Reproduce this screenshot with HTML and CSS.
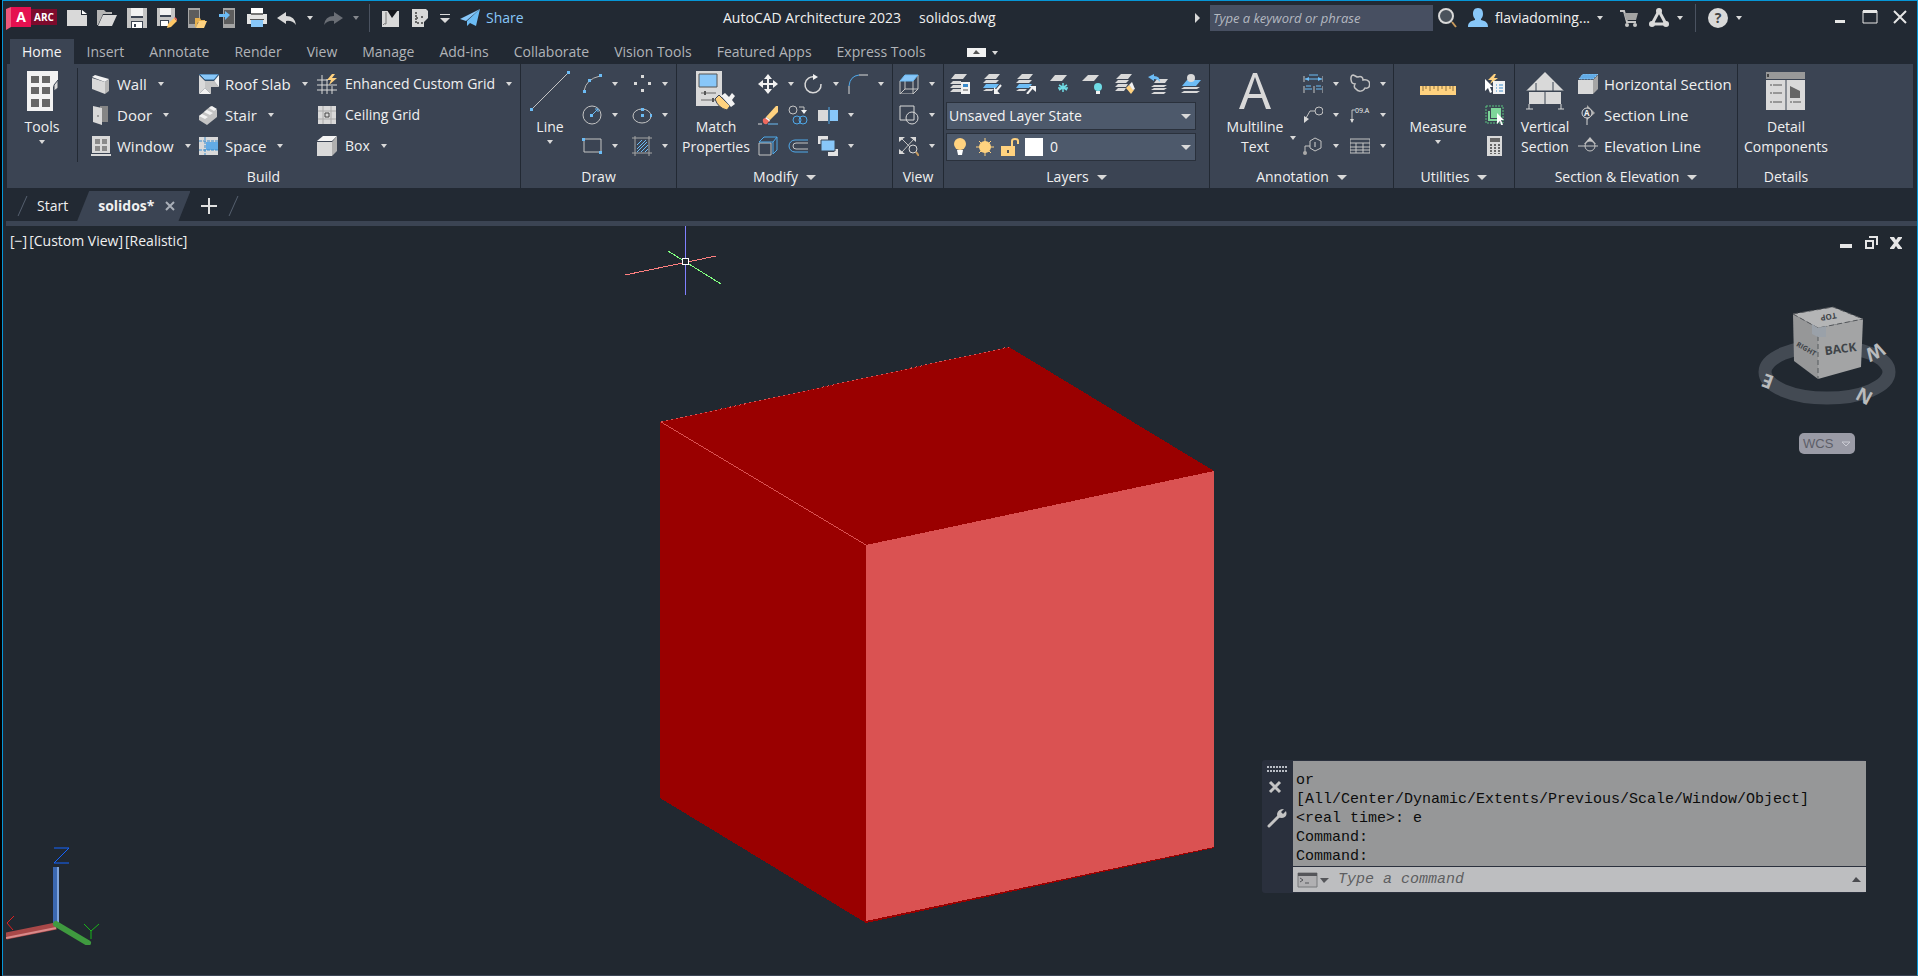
FILE: index.html
```html
<!DOCTYPE html>
<html lang="en">
<head>
    <meta charset="UTF-8">
    <meta name="viewport" content="width=device-width, initial-scale=1.0">
    <title>AutoCAD Architecture 2023 - solidos.dwg</title>
    <link rel="stylesheet" href="styles.css">
</head>
<body>
<div class="app">

    <!-- Title bar -->
    <header class="titlebar">
        <div class="quick-access">
            <button class="logo" aria-label="Application menu">
                <svg class="logo-fold" viewBox="0 0 5 23"><path d="M0 2L5 0V20L0 23Z" fill="#f0587c"/></svg>
                <span class="logo-a">A</span><span class="logo-arc">ARC</span>
            </button>
            <button aria-label="New"><svg viewBox="0 0 20 20"><path d="M0 2H14V7H20V18H0Z" fill="#d9d9d9"/><path d="M15 2L20 6H15Z" fill="#fff"/></svg></button>
            <button aria-label="Open"><svg viewBox="0 0 20 20"><path d="M0 2H7L9 4H15V6H6L1 17H0Z" fill="#b5b5b5"/><path d="M6 7H20L15 18H1Z" fill="#d9d9d9"/></svg></button>
            <button aria-label="Save"><svg viewBox="0 0 20 20"><path d="M0 0H20V20H0Z" fill="#c4c4c4"/><path d="M4 0H16V9H4Z" fill="#f2f2f2"/><path d="M4 8H16V10H4ZM4 13H16V20H4Z" fill="#3c4452"/><path d="M5 14H15V20H5Z" fill="#fff"/><path d="M7 16H9V19H7Z" fill="#3c4452"/></svg></button>
            <button aria-label="Save as"><svg viewBox="0 0 20 20"><path d="M0 0H18V11L10 18H0Z" fill="#c4c4c4"/><path d="M3 0H14V7H3Z" fill="#f2f2f2"/><path d="M3 7H14V9H3ZM3 12H12V18H3Z" fill="#3c4452"/><path d="M4 13H11V18H4Z" fill="#fff"/><path d="M10 20L11 16L17 10L20 13L14 19Z" fill="#ffc766"/><path d="M17 10L18 9L20 11L20 13Z" fill="#ef6a5e"/></svg></button>
            <button aria-label="Open from mobile"><svg viewBox="0 0 20 20"><path d="M1 0H13V20H1Z" fill="#a5a5a5"/><path d="M2 2H12V16H2Z" fill="#5d5d5d"/><path d="M8 10H13L14 12H18V14H11L9 19H8Z" fill="#e8b14e"/><path d="M12 13H20L17 20H9Z" fill="#ffd27f"/></svg></button>
            <button aria-label="Save to mobile"><svg viewBox="0 0 20 20"><path d="M6 0H18V20H6Z" fill="#a5a5a5"/><path d="M7 2H17V16H7Z" fill="#5d5d5d"/><path d="M2 6H8V3L13 7L8 12V9H2Z" fill="#6cbcf5"/></svg></button>
            <button aria-label="Plot"><svg viewBox="0 0 20 20"><path d="M4 0H16V5H4Z" fill="#fff"/><path d="M0 6H20V16H0Z" fill="#e3e3e3"/><path d="M4 5H16V7H4Z" fill="#777"/><path d="M4 12H16V19H4Z" fill="#88c7f9"/><path d="M3 11H17V12H3Z" fill="#555"/></svg></button>
            <button aria-label="Undo"><svg viewBox="0 0 20 20"><path d="M0 10L9 4V8Q18 8 19 17Q15 12 9 13V16Z" fill="#d9d9d9"/></svg></button>
            <span class="caret"></span>
            <button aria-label="Redo"><svg viewBox="0 0 20 20"><path d="M20 10L11 4V8Q2 8 1 17Q5 12 11 13V16Z" fill="#6a6e75"/></svg></button>
            <span class="caret dim"></span>
            <span class="bar-divider"></span>
            <button aria-label="Project navigator"><svg viewBox="0 0 20 20"><path d="M2 3H19V19H2Z" fill="#d9d9d9"/><path d="M7 2H18L12 10Z" fill="#15181d"/><path d="M6 4V16Q4 15 3 17" fill="none" stroke="#777"/></svg></button>
            <button aria-label="Design center"><svg viewBox="0 0 20 20"><path d="M2 1H16L18 3V10L14 14V19H2Z" fill="#d9d9d9"/><path d="M5 5H8M6 7V15H9M6 10H9M11 9H13M11 15H13" stroke="#666" stroke-width="2" stroke-dasharray="2 1" fill="none"/></svg></button>
            <button class="customize" aria-label="Customize"><svg viewBox="0 0 10 9"><path d="M0 0H10V1H0ZM0 4H10L5 9Z" fill="#d9d9d9"/></svg></button>
            <a class="share" href="#"><svg viewBox="0 0 20 20"><path d="M20 1L0 11L6 13Z" fill="#88c7f9"/><path d="M20 1L7 13V18L10 15L16 18Z" fill="#6cbcf5"/></svg>Share</a>
        </div>

        <div class="title"><span>AutoCAD Architecture 2023</span><span>solidos.dwg</span></div>

        <div class="infocenter">
            <button class="expand" aria-label="Collapse search"><svg viewBox="0 0 5 10"><path d="M0 0L5 5L0 10Z" fill="#d9d9d9"/></svg></button>
            <div class="search-box">
                <input class="search" type="text" placeholder="Type a keyword or phrase" aria-label="Search">
                <button aria-label="Search"><svg viewBox="0 0 20 20"><circle cx="8" cy="8" r="7" fill="#4a525b" stroke="#d9d9d9" stroke-width="2"/><path d="M14 14L18 19" stroke="#c79a5c" stroke-width="2"/></svg></button>
            </div>
            <button class="user"><svg viewBox="0 0 20 20"><path d="M10 0C14 0 15 3 15 6C15 8 14 10 13 11V12C18 13 20 15 20 19H0C0 15 2 13 7 12V11C6 10 5 8 5 6C5 3 6 0 10 0Z" fill="#88c7f9"/></svg><span>flaviadoming...</span><span class="caret"></span></button>
            <button aria-label="App store"><svg viewBox="0 0 20 20"><path d="M1 3H5L8 14H17" fill="none" stroke="#c6c6c6" stroke-width="2"/><path d="M5 5H19L17 12H7Z" fill="#a3a3a3"/><circle cx="8" cy="17" r="2" fill="#c6c6c6"/><circle cx="16" cy="17" r="2" fill="#c6c6c6"/></svg></button>
            <button class="with-caret" aria-label="Autodesk app"><svg viewBox="0 0 20 20"><path d="M10 3L3 16H17Z" fill="none" stroke="#d9d9d9" stroke-width="3"/><circle cx="10" cy="3" r="3" fill="#d9d9d9"/><circle cx="3" cy="16" r="3" fill="#d9d9d9"/><circle cx="17" cy="16" r="3" fill="#d9d9d9"/></svg><span class="caret"></span></button>
            <span class="bar-divider"></span>
            <button class="with-caret help" aria-label="Help"><span class="help-mark">?</span><span class="caret"></span></button>
            <div class="window-buttons">
                <button aria-label="Minimize"><svg viewBox="0 0 16 14"><path d="M3 10H13V13H3Z" fill="#e6e6e6"/></svg></button>
                <button aria-label="Maximize"><svg viewBox="0 0 16 14"><path d="M1 1H15V13H1Z" fill="none" stroke="#e6e6e6"/><path d="M1 0H15V3H1Z" fill="#e6e6e6"/></svg></button>
                <button aria-label="Close"><svg viewBox="0 0 16 14"><path d="M2 1L14 13M14 1L2 13" stroke="#e6e6e6" stroke-width="2"/></svg></button>
            </div>
        </div>
    </header>

    <!-- Ribbon tabs -->
    <nav class="ribbon-tabs">
        <a class="active" href="#">Home</a>
        <a href="#">Insert</a>
        <a href="#">Annotate</a>
        <a href="#">Render</a>
        <a href="#">View</a>
        <a href="#">Manage</a>
        <a href="#">Add-ins</a>
        <a href="#">Collaborate</a>
        <a href="#">Vision Tools</a>
        <a href="#">Featured Apps</a>
        <a href="#">Express Tools</a>
        <button class="minimize-ribbon" aria-label="Minimize ribbon"><svg viewBox="0 0 19 9"><path d="M0 0H19V9H0Z" fill="#f2f2f2"/><path d="M6 6H13L9 2Z" fill="#555"/></svg><span class="caret"></span></button>
    </nav>

    <!-- Ribbon panels -->
    <div class="ribbon">
        <section class="panel panel-build">
            <div class="panel-body">
                <button class="big"><svg viewBox="0 0 40 40"><path d="M5 0H36V10L31 16V40H5Z" fill="#f2f2f2"/><path d="M32 14L36 9V17L32 20Z" fill="#d9d9d9" stroke="#3b4453"/><path d="M9 5H17V12H9ZM20 5H28V12H20ZM9 16H17V23H9ZM20 16H28V23H20ZM9 28H17V36H9ZM20 28H28V36H20Z" fill="#666"/></svg><span>Tools</span><span class="caret"></span></button>
                <div class="build-tools">
                    <button class="tool"><svg viewBox="0 0 20 20"><path d="M1 4L14 8V20L1 15Z" fill="#d9d9d9"/><path d="M1 3L4 1L18 5L14 8Z" fill="#f2f2f2"/><path d="M14 8L18 5V17L14 20Z" fill="#b5b5b5"/></svg>Wall<span class="caret"></span></button>
                    <button class="tool"><svg viewBox="0 0 20 20"><path d="M9 1H17V17H9Z" fill="#858585"/><path d="M2 1L11 3V20L2 17Z" fill="#d9d9d9"/><circle cx="7" cy="11" r="1" fill="#888"/></svg>Door<span class="caret"></span></button>
                    <button class="tool"><svg viewBox="0 0 20 20"><path d="M1 0H19V17H1ZM0 18H20V20H0Z" fill="#d9d9d9"/><path d="M4 3H9V8H4ZM11 3H16V8H11ZM4 10H9V15H4ZM11 10H16V15H11Z" fill="#8a8a8a"/></svg>Window<span class="caret"></span></button>
                    <button class="tool"><svg viewBox="0 0 20 20"><path d="M0 0H20L15 6H6Z" fill="#88c7f9" stroke="#2d5c85"/><path d="M0 1L6 7V14L0 20Z" fill="#d9d9d9"/><path d="M6 7H15L20 13H12V20L6 14Z" fill="#c4c4c4"/><path d="M0 20L6 14L12 20ZM20 1V13L15 7Z" fill="#f2f2f2"/></svg>Roof Slab<span class="caret"></span></button>
                    <button class="tool"><svg viewBox="0 0 20 20"><path d="M0 11L5 7L7 5L12 1L18 5V12L8 20L0 15Z" fill="#c4c4c4"/><path d="M0 11L3 9L9 12L6 14ZM5 7L8 5L14 8L11 10ZM10 3L13 1L18 4L15 6Z" fill="#f2f2f2"/></svg>Stair<span class="caret"></span></button>
                    <button class="tool"><svg viewBox="0 0 20 20"><path d="M0 1H19V19H0Z" fill="#d9d9d9"/><path d="M7 6H19V14H7Z" fill="#62abe6"/><path d="M6 1V19M0 5H19M0 14H19" stroke="#3b8bcb" stroke-dasharray="3 1"/></svg>Space<span class="caret"></span></button>
                    <button class="tool wide"><svg viewBox="0 0 20 20"><path d="M5 1V20M10 5V20M15 12V20M0 6H11M0 11H20M0 16H20" stroke="#d9d9d9"/><path d="M15 0L10 6H14L12 11L20 4H15L18 0Z" fill="#ffd27f"/></svg>Enhanced Custom Grid<span class="caret"></span></button>
                    <button class="tool wide"><svg viewBox="0 0 20 20"><path d="M1 1H19V19H1Z" fill="#d9d9d9"/><path d="M6 1V19M14 1V19M1 6H19M1 14H19" stroke="#aaa"/><path d="M8 8H12V12H8Z" fill="#d9d9d9" stroke="#444"/></svg>Ceiling Grid</button>
                    <button class="tool wide"><svg viewBox="0 0 20 20"><path d="M0 6H15V20H0Z" fill="#d9d9d9"/><path d="M0 5L6 0H20L15 5Z" fill="#f5f5f5"/><path d="M15 6L20 0V15L15 20Z" fill="#b0b0b0"/></svg>Box<span class="caret"></span></button>
                </div>
            </div>
            <h2>Build</h2>
        </section>

        <section class="panel panel-draw">
            <div class="panel-body">
                <button class="big"><svg viewBox="0 0 40 40"><path d="M2 38L38 2" stroke="#c4c4c4"/><path d="M0 37H3V40H0ZM37 0H40V3H37Z" fill="#6cbcf5"/></svg><span>Line</span><span class="caret"></span></button>
                <div class="icon-grid">
                    <button class="tool" aria-label="Arc"><svg viewBox="0 0 20 20"><path d="M2 17Q4 5 18 2" fill="none" stroke="#b5b5b5"/><path d="M1 16H4V19H1ZM6 5H9V8H6ZM17 0H20V3H17Z" fill="#6cbcf5"/></svg><span class="caret"></span></button>
                    <button class="tool" aria-label="Multiple points"><svg viewBox="0 0 20 20"><path d="M9 1H12V4H9ZM2 8H5V11H2ZM16 8H19V11H16ZM9 15H12V18H9Z" fill="#d9d9d9"/></svg><span class="caret"></span></button>
                    <button class="tool" aria-label="Circle"><svg viewBox="0 0 20 20"><circle cx="10" cy="10" r="9" fill="none" stroke="#c4c4c4"/><path d="M10 10L16 4M13 4H16V7" fill="none" stroke="#6cbcf5"/><path d="M8 9H11V12H8Z" fill="#6cbcf5"/></svg><span class="caret"></span></button>
                    <button class="tool" aria-label="Ellipse"><svg viewBox="0 0 20 20"><ellipse cx="10" cy="11" rx="9" ry="7" fill="none" stroke="#c4c4c4"/><path d="M9 3H12V6H9ZM9 9H12V12H9ZM18 9H20V12H18Z" fill="#6cbcf5"/></svg><span class="caret"></span></button>
                    <button class="tool" aria-label="Rectangle"><svg viewBox="0 0 20 20"><path d="M2 3H19V16H2Z" fill="none" stroke="#c4c4c4"/><path d="M0 2H3V5H0ZM17 15H20V18H17Z" fill="#6cbcf5"/></svg><span class="caret"></span></button>
                    <button class="tool" aria-label="Hatch"><svg viewBox="0 0 20 20"><path d="M3 0V20M17 0V20M0 2H20M0 17H20" stroke="#a5a5a5"/><path d="M5 9L10 4M5 13L14 4M5 16L15 6M9 16L16 9M13 16L16 13" stroke="#6cbcf5"/></svg><span class="caret"></span></button>
                </div>
            </div>
            <h2>Draw</h2>
        </section>

        <section class="panel panel-modify">
            <div class="panel-body">
                <button class="big"><svg viewBox="0 0 40 40"><path d="M0 0H26V35H0Z" fill="#d9d9d9"/><path d="M3 3H21V16H3Z" fill="#88c7f9" stroke="#555"/><path d="M5 22H20M5 29H20" stroke="#666"/><path d="M8 20H10V24H8ZM16 27H18V31H16Z" fill="#555"/><path d="M19 28L23 24L34 35L31 39Q22 37 19 28Z" fill="#ffd27f" stroke="#3b4453"/><path d="M25 25L29 22L33 26L36 22L39 25L36 29L39 33L35 36Z" fill="#f2f2f2"/></svg><span>Match<br>Properties</span></button>
                <div class="icon-rows">
                    <div class="icon-row">
                        <button class="tool" aria-label="Move"><svg viewBox="0 0 20 20"><path d="M10 3V17M3 10H17" stroke="#f2f2f2" stroke-width="2"/><path d="M10 0L14 5H6ZM10 20L14 15H6ZM0 10L5 6V14ZM20 10L15 6V14Z" fill="#f2f2f2"/></svg><span class="caret"></span></button>
                        <button class="tool" aria-label="Rotate"><svg viewBox="0 0 20 20"><path d="M12 3A8 8 0 1 0 18 10" fill="none" stroke="#d9d9d9" stroke-width="1.5"/><path d="M10 0L15 3L10 6Z" fill="#f2f2f2"/></svg><span class="caret"></span></button>
                        <button class="tool" aria-label="Fillet"><svg viewBox="0 0 20 20"><path d="M1 20V12M11 1H20" stroke="#d9d9d9"/><path d="M1 12Q2 2 11 1" fill="none" stroke="#4fa9ea"/></svg><span class="caret"></span></button>
                    </div>
                    <div class="icon-row">
                        <button class="tool" aria-label="Erase"><svg viewBox="0 0 20 20"><path d="M0 19H4" stroke="#d9d9d9"/><path d="M10 19H20" stroke="#6cbcf5"/><path d="M20 1V7L12 15L8 12L18 1Z" fill="#ffd27f"/><path d="M8 12L12 15L11 17L7 14Z" fill="#fff"/><path d="M5 14L7 13L11 16L9 19Q4 20 5 14Z" fill="#ef6a5e"/></svg></button>
                        <button class="tool" aria-label="Copy"><svg viewBox="0 0 20 20"><circle cx="5" cy="5" r="4" fill="none" stroke="#c4c4c4"/><path d="M11 2H16V6" fill="none" stroke="#c4c4c4"/><path d="M13 5H19L16 9Z" fill="#f2f2f2"/><circle cx="9" cy="15" r="4" fill="none" stroke="#4fa9ea"/><circle cx="15" cy="15" r="4" fill="none" stroke="#4fa9ea"/></svg></button>
                        <button class="tool" aria-label="Mirror"><svg viewBox="0 0 20 20"><path d="M0 5H10V16H0Z" fill="#d9d9d9"/><path d="M12 5H20V16H12Z" fill="#88c7f9"/><path d="M11 2V19" stroke="#4fa9ea"/></svg><span class="caret"></span></button>
                    </div>
                    <div class="icon-row">
                        <button class="tool" aria-label="Extrude"><svg viewBox="0 0 20 20"><path d="M1 7H13V19H1Z" fill="none" stroke="#c4c4c4"/><path d="M1 6L6 1H19L15 6ZM15 18L19 14V1M15 6V18" fill="none" stroke="#4fa9ea"/></svg></button>
                        <button class="tool" aria-label="Offset"><svg viewBox="0 0 20 20"><path d="M20 4H7A6 6 0 0 0 7 16H20" fill="none" stroke="#4fa9ea"/><path d="M20 7H8A3 3 0 0 0 8 13H20" fill="none" stroke="#c4c4c4"/></svg></button>
                        <button class="tool" aria-label="Draw order"><svg viewBox="0 0 20 20"><path d="M0 0H10V4H4V8H0ZM10 16H16V13H20V20H10Z" fill="#e3e3e3"/><path d="M3 4H17V15H3Z" fill="#88c7f9" stroke="#3b4453"/></svg><span class="caret"></span></button>
                    </div>
                </div>
            </div>
            <h2>Modify<span class="caret large"></span></h2>
        </section>

        <section class="panel panel-view">
            <div class="panel-body">
                <div class="icon-grid">
                    <button class="tool" aria-label="Views"><svg viewBox="0 0 20 20"><path d="M1 7V20H14V7M14 20L19 15V1M6 7V15H19M1 20L6 15" fill="none" stroke="#c4c4c4"/><path d="M1 7L6 1H19L14 7Z" fill="#88c7f9" stroke="#6cbcf5"/></svg><span class="caret"></span></button>
                    <button class="tool" aria-label="Visual styles"><svg viewBox="0 0 20 20"><path d="M1 1H15V15H1Z" fill="none" stroke="#d9d9d9"/><circle cx="13" cy="13" r="6" fill="none" stroke="#d9d9d9"/></svg><span class="caret"></span></button>
                    <button class="tool" aria-label="Zoom extents"><svg viewBox="0 0 20 20"><path d="M3 3L15 15M15 3L3 16" stroke="#c4c4c4"/><path d="M0 1H6L0 6ZM17 1H11L17 6ZM0 18H6L0 13Z" fill="#d9d9d9"/><circle cx="14" cy="13" r="4" fill="#3b4453" stroke="#d9d9d9"/><path d="M17 16L20 20" stroke="#c79a5c" stroke-width="2"/></svg><span class="caret"></span></button>
                </div>
            </div>
            <h2>View</h2>
        </section>

        <section class="panel panel-layers">
            <div class="panel-body">
                <div class="layer-controls">
                    <div class="layer-icons">
                        <button class="tool" aria-label="Layer properties"><svg viewBox="0 0 20 20"><path d="M5 0H17L13 5H1ZM3 7H11V10H0ZM3 11H11V14H0ZM3 15H11V18H0Z" fill="#d9d9d9"/><path d="M11 8H20V20H11Z" fill="#f2f2f2"/><path d="M13 10H18V13H13Z" fill="#3b8bcb"/><path d="M13 16H18" stroke="#555"/></svg></button>
                        <button class="tool" aria-label="Make current"><svg viewBox="0 0 20 20"><path d="M6 0H17L13 5H1ZM3 6H16L13 9H0ZM3 15H11L9 17H0Z" fill="#d9d9d9"/><path d="M3 10H16L13 14H0Z" fill="#6cbcf5"/><path d="M18 11L13 17" stroke="#f2f2f2" stroke-width="2"/><path d="M11 13V20H17Z" fill="#f2f2f2"/></svg></button>
                        <button class="tool" aria-label="Match layer"><svg viewBox="0 0 20 20"><path d="M6 0H17L13 5H1ZM3 6H16L13 9H0ZM3 15H11L9 17H0Z" fill="#d9d9d9"/><path d="M3 10H16L13 14H0Z" fill="#6cbcf5"/><path d="M11 20L16 14" stroke="#f2f2f2" stroke-width="2"/><path d="M13 12H20V18Z" fill="#f2f2f2"/></svg></button>
                        <button class="tool" aria-label="Freeze layer"><svg viewBox="0 0 20 20"><path d="M6 1H18L13 7H1Z" fill="#d9d9d9"/><path d="M14 9V18M10 11L18 16M18 11L10 16M9 14H19" stroke="#6fdce6" stroke-width="1.5"/></svg></button>
                        <button class="tool" aria-label="Layer off"><svg viewBox="0 0 20 20"><path d="M6 1H17L12 7H0Z" fill="#d9d9d9"/><circle cx="16" cy="13" r="4" fill="#6fdce6"/><path d="M14 17H18V20H14Z" fill="#f2f2f2"/></svg></button>
                        <button class="tool" aria-label="Match layer properties"><svg viewBox="0 0 20 20"><path d="M6 0H17L13 5H1ZM3 6H14L11 9H0ZM3 10H13L11 13H0ZM3 14H11L9 17H0Z" fill="#d9d9d9"/><path d="M11 14L14 11L19 16L16 20Z" fill="#ffd27f"/><path d="M14 11L17 8L20 15L18 16Z" fill="#f2f2f2"/></svg></button>
                        <button class="tool" aria-label="Layer previous"><svg viewBox="0 0 20 20"><path d="M9 5H20L17 9H6ZM6 11H19L16 13H3ZM6 14H19L16 16H3ZM6 18H18L16 20H3Z" fill="#d9d9d9"/><path d="M0 3L6 0V2Q12 2 12 8Q10 5 6 5V7Z" fill="#6cbcf5"/></svg></button>
                        <button class="tool" aria-label="Isolate layer"><svg viewBox="0 0 20 20"><path d="M6 6H20L15 12H1Z" fill="#6cbcf5"/><path d="M3 13H19L16 15H0ZM3 17H19L16 19H0Z" fill="#d9d9d9"/><circle cx="10" cy="4" r="4" fill="#d9d9d9"/></svg></button>
                    </div>
                    <div class="combo">
                        <select aria-label="Layer state"><option>Unsaved Layer State</option></select>
                        <span class="caret large"></span>
                    </div>
                    <div class="combo layer-combo">
                        <svg viewBox="0 0 20 20"><circle cx="10" cy="7" r="6" fill="#ffd27f"/><path d="M7 13H13L12 18H8Z" fill="#fff"/></svg>
                        <svg viewBox="0 0 20 20"><path d="M10 1V19M1 10H19M4 4L16 16M16 4L4 16" stroke="#ffd27f"/><circle cx="10" cy="10" r="6" fill="#ffd27f"/></svg>
                        <svg viewBox="0 0 20 20"><path d="M1 9H15V19H1Z" fill="#ffd27f"/><path d="M12 9V4Q12 2 15 2Q18 2 18 4V7" fill="none" stroke="#ffd27f" stroke-width="2"/><path d="M8 13V16" stroke="#555" stroke-width="2"/></svg>
                        <span class="swatch"></span>
                        <select aria-label="Layer"><option>0</option></select>
                        <span class="caret large"></span>
                    </div>
                </div>
            </div>
            <h2>Layers<span class="caret large"></span></h2>
        </section>

        <section class="panel panel-annotation">
            <div class="panel-body">
                <button class="big"><svg viewBox="0 0 40 40"><path d="M4 38L18 2H22L36 38H31L27 27H13L9 38ZM14 23H26L20 6Z" fill="#d9d9d9" fill-rule="evenodd"/></svg><span>Multiline<br>Text</span><span class="caret side"></span></button>
                <div class="icon-grid">
                    <button class="tool" aria-label="Dimension"><svg viewBox="0 0 20 20"><path d="M1 2V8M20 2V8M1 12V19M20 12V19M11 12V19" stroke="#c4c4c4"/><path d="M2 5H19M6 1H15M2 15H9M13 15H19M3 12H8M13 12H18" stroke="#6cbcf5"/><path d="M2 5L6 3V7ZM19 5L15 3V7Z" fill="#6cbcf5"/></svg><span class="caret"></span></button>
                    <button class="tool" aria-label="Revision cloud"><svg viewBox="0 0 20 20"><path d="M5 10C0 10 0 1 3 1C6 2 6 3 8 3C11 2 13 3 13 6C18 5 21 8 19 13C17 15 16 14 15 14C13 18 8 18 6 15C4 14 4 12 5 10Z" fill="none" stroke="#c4c4c4" stroke-width="1.5"/></svg><span class="caret"></span></button>
                    <button class="tool" aria-label="Leader"><svg viewBox="0 0 20 20"><path d="M3 13L7 6H12" fill="none" stroke="#c4c4c4"/><circle cx="16" cy="6" r="4" fill="none" stroke="#c4c4c4"/><path d="M1 11L6 14L1 18Z" fill="#d9d9d9"/></svg><span class="caret"></span></button>
                    <button class="tool" aria-label="Keynote"><svg viewBox="0 0 20 20"><path d="M2 17V5H5" fill="none" stroke="#c4c4c4"/><path d="M0 14H4L2 18Z" fill="#d9d9d9"/><text x="5" y="8" font-size="7" fill="#f2f2f2">09.A</text></svg><span class="caret"></span></button>
                    <button class="tool" aria-label="Callout"><svg viewBox="0 0 20 20"><path d="M2 17V10H7M12 2L18 5V12L12 15L7 12V5Z" fill="none" stroke="#c4c4c4"/><path d="M12 6V11" stroke="#d9d9d9"/><circle cx="2" cy="17" r="2" fill="#aaa"/></svg><span class="caret"></span></button>
                    <button class="tool" aria-label="Table"><svg viewBox="0 0 20 20"><path d="M0 3H20V17H0ZM0 7H20M0 11H20M0 14H20M6 7V17M13 7V17" fill="none" stroke="#c4c4c4"/></svg><span class="caret"></span></button>
                </div>
            </div>
            <h2>Annotation<span class="caret large"></span></h2>
        </section>

        <section class="panel panel-utilities">
            <div class="panel-body">
                <button class="big"><svg viewBox="0 0 40 40"><path d="M2 15H38V24H2Z" fill="#ffd27f"/><path d="M5 15V20M8 15V18M12 15V20M16 15V18M20 15V20M24 15V18M28 15V20M32 15V18M35 15V20" stroke="#8f7442"/></svg><span>Measure</span><span class="caret"></span></button>
                <div class="icon-grid">
                    <button class="tool" aria-label="Quick select"><svg viewBox="0 0 20 20"><path d="M9 0L3 6H7L5 10L13 4H9L11 0Z" fill="#ffd27f"/><path d="M8 7H20V20H8Z" fill="#f2f2f2"/><path d="M11 11H12M14 11H18M11 14H12M14 14H18M11 17H12M14 17H18" stroke="#3b8bcb"/><path d="M0 5L8 13H5L7 18L5 19L3 14L0 17Z" fill="#fff"/></svg></button>
                    <button class="tool" aria-label="Select similar"><svg viewBox="0 0 20 20"><path d="M1 1H18V18H1Z" fill="none" stroke="#5bc480" stroke-dasharray="2 1"/><path d="M6 3H16V13H6Z" fill="#7ed69a"/><path d="M3 6H5V14H13V16H3Z" fill="#7ed69a"/><path d="M12 8L19 15H16L18 20L16 20L15 16L12 19Z" fill="#fff"/></svg></button>
                    <button class="tool" aria-label="Calculator"><svg viewBox="0 0 20 20"><path d="M2 0H17V20H2Z" fill="#d9d9d9"/><path d="M5 2H15V6H5Z" fill="#666"/><path d="M6 8V18M10 8V18M14 8V18" stroke="#666" stroke-width="2" stroke-dasharray="2 1"/></svg></button>
                </div>
            </div>
            <h2>Utilities<span class="caret large"></span></h2>
        </section>

        <section class="panel panel-section">
            <div class="panel-body">
                <button class="big"><svg viewBox="0 0 40 40"><path d="M20 1L39 20H1Z" fill="#d9d9d9"/><path d="M4 21H36V33H4Z" fill="#d9d9d9"/><path d="M4 33V38M36 33V38M1 38H8M33 38H39" stroke="#d9d9d9"/><path d="M11 12V20M28 11V20M20 20V33M1 20H39" stroke="#3b4453"/></svg><span>Vertical<br>Section</span></button>
                <div class="section-tools">
                    <button class="tool"><svg viewBox="0 0 20 20"><path d="M0 6H15V20H0Z" fill="#d9d9d9"/><path d="M15 6L20 1V15L15 20Z" fill="#a5a5a5"/><path d="M1 5L5 0H20L15 5Z" fill="#62abe6" stroke="#88c7f9" stroke-dasharray="2 1"/></svg>Horizontal Section</button>
                    <button class="tool"><svg viewBox="0 0 20 20"><path d="M9 0L17 8L9 15Z" fill="#a5a5a5"/><path d="M9 12V20" stroke="#d9d9d9"/><circle cx="9" cy="8" r="5" fill="#3b4453" stroke="#d9d9d9"/><text x="6" y="11" font-size="8" font-weight="bold" fill="#f2f2f2">A</text></svg>Section Line</button>
                    <button class="tool"><svg viewBox="0 0 20 20"><path d="M0 10H20" stroke="#c4c4c4"/><path d="M12 1L18 8H6Z" fill="#c4c4c4"/><circle cx="12" cy="10" r="5" fill="#3b4453" stroke="#c4c4c4"/><path d="M7 10H17" stroke="#c4c4c4"/></svg>Elevation Line</button>
                </div>
            </div>
            <h2>Section &amp; Elevation<span class="caret large"></span></h2>
        </section>

        <section class="panel panel-details">
            <div class="panel-body">
                <button class="big"><svg viewBox="0 0 40 40"><path d="M0 1H39V8H0Z" fill="#999"/><path d="M0 9H39V39H0Z" fill="#d9d9d9"/><path d="M1 3H3V6H1Z" fill="#444"/><path d="M20 9V39" stroke="#3b4453"/><path d="M24 15L34 20V27H24Z" fill="#666"/><path d="M4 14H16M4 22H16M4 31H16M24 31H35" stroke="#555" stroke-dasharray="2 1 9 1"/></svg><span>Detail<br>Components</span></button>
            </div>
            <h2>Details</h2>
        </section>
    </div>

    <!-- Open drawings -->
    <nav class="doc-tabs">
        <span class="slash"></span>
        <a href="#">Start</a>
        <div class="doc-active">
            <a href="#">solidos*</a>
            <button aria-label="Close drawing"><svg viewBox="0 0 12 12"><path d="M2 2L10 10M10 2L2 10" stroke="#a9afb8" stroke-width="2"/></svg></button>
        </div>
        <button class="new-tab" aria-label="New drawing"><svg viewBox="0 0 16 16"><path d="M8 0V16M0 8H16" stroke="#e0e0e0" stroke-width="2"/></svg></button>
        <span class="slash"></span>
    </nav>

    <!-- Drawing area -->
    <main class="viewport">
        <div class="view-label"><button>[&minus;]</button><button>[Custom View]</button><button>[Realistic]</button></div>

        <div class="view-buttons">
            <button aria-label="Minimize view"><svg viewBox="0 0 14 14"><path d="M1 8H13V12H1Z" fill="#e6e6e6"/></svg></button>
            <button aria-label="Restore view"><svg viewBox="0 0 14 14"><path d="M5 1H13V9M2 5H9V12H2Z" fill="none" stroke="#e6e6e6" stroke-width="2"/></svg></button>
            <button aria-label="Close view"><svg viewBox="0 0 14 14"><path d="M1 1H5L7 4L9 1H13V2L9 7L13 12V13H9L7 10L5 13H1V12L5 7L1 2Z" fill="#e6e6e6"/></svg></button>
        </div>

        <svg class="crosshair" viewBox="0 0 100 70" shape-rendering="crispEdges">
            <path d="M61 0V69" stroke="#8080ff"/>
            <path d="M1 49L92 30" stroke="#ff8080"/>
            <path d="M44 25L97 58" stroke="#80ff80"/>
            <path d="M58 32H64V38H58Z" fill="#212830" stroke="#fff"/>
        </svg>

        <svg class="solid" viewBox="0 0 555 577" shape-rendering="crispEdges">
            <path d="M0 75L349 0L554 124L206 198L206 576L0 451Z" fill="#9a0000"/>
            <path d="M206 576L554 501V499L206 574Z" fill="#9a0000"/>
            <path d="M206 198L554 124V500L206 574Z" fill="#da5252"/>
            <path d="M1 75L206 198" stroke="#da5252"/>
            <path d="M1 75L349 0" stroke="#da5252" stroke-dasharray="2 3"/>
        </svg>

        <div class="viewcube">
            <svg viewBox="0 0 150 110">
                <ellipse cx="77" cy="68" rx="62" ry="26" fill="none" stroke="#434a53" stroke-width="13"/>
                <g fill="#b9bbbd" font-size="19" font-weight="bold" text-anchor="middle">
                    <text transform="translate(20 71) rotate(200)">E</text>
                    <text transform="translate(111 98) rotate(28)">N</text>
                    <text transform="translate(122 42) rotate(152)">W</text>
                </g>
                <path d="M43 10L83 3L113 15L68 24Z" fill="#b4b5b6"/>
                <path d="M43 10L68 24V75L44 57Z" fill="#969798"/>
                <path d="M68 24L113 15L111 63L68 75Z" fill="#a3a4a5"/>
                <path d="M43 10L68 24L113 15M68 24V75M43 10L83 3L113 15" fill="none" stroke="#55585c" stroke-dasharray="5 3"/>
                <path d="M62 20L68 24L76 22V33H68L62 30Z" fill="#9aa1a9"/>
                <g fill="#3f4449" font-weight="bold" text-anchor="middle">
                    <text font-size="12" transform="translate(91 49) rotate(-8)">BACK</text>
                    <text font-size="7" transform="translate(55 47) rotate(30)">RIGHT</text>
                    <text font-size="8" transform="translate(78 10) rotate(170)">TOP</text>
                </g>
            </svg>
            <button class="wcs">WCS<svg viewBox="0 0 10 6"><path d="M1 1H9L5 5Z" fill="none" stroke="#c9cad2"/></svg></button>
        </div>

        <svg class="ucs" viewBox="0 0 100 100">
            <path d="M0 91L50 81" stroke="#a84848" stroke-width="7"/>
            <path d="M0 93L50 83" stroke="#d98a8a" stroke-width="2"/>
            <path d="M50 80V22" stroke="#3a67b0" stroke-width="6"/>
            <path d="M52 80V22" stroke="#7fa3da" stroke-width="2"/>
            <path d="M50 79L82 98" stroke="#3f9a3f" stroke-width="6" stroke-linecap="round"/>
            <path d="M48 3H63L48 18H63" fill="none" stroke="#1464ff"/>
            <path d="M78 79L85 86L93 79M85 86V94" fill="none" stroke="#19b419"/>
            <path d="M8 71L1 78L7 85" fill="none" stroke="#e02020"/>
        </svg>

        <div class="command-window">
            <div class="command-grip">
                <svg class="grip" viewBox="0 0 20 7"><path d="M0 1H20M0 5H20" stroke="#b9bdc5" stroke-width="2" stroke-dasharray="2 1"/></svg>
                <button aria-label="Close command line"><svg viewBox="0 0 16 16"><path d="M3 3L13 13M13 3L3 13" stroke="#c4c4c4" stroke-width="3"/></svg></button>
                <button aria-label="Command settings"><svg class="wrench" viewBox="0 0 20 20"><path d="M2 18L12 8" stroke="#c4c4c4" stroke-width="3" stroke-linecap="round"/><path d="M17 1L14 4L16 6L19 3Q21 9 15 10Q10 10 10 6Q11 1 17 1Z" fill="#c4c4c4"/></svg></button>
            </div>
            <div class="command-main">
                <div class="command-log">or<br>[All/Center/Dynamic/Extents/Previous/Scale/Window/Object]<br>&lt;real time&gt;: e<br>Command:<br>Command:</div>
                <div class="command-input">
                    <button aria-label="Recent commands"><svg viewBox="0 0 32 16"><path d="M1 1H20V15H1Z" fill="#b0b0b2" stroke="#77787a"/><path d="M1 1H20V4H1Z" fill="#55565a"/><path d="M3 6L6 8L3 10M8 11H12" fill="none" stroke="#55565a"/><path d="M23 6H32L27 11Z" fill="#55565a"/></svg></button>
                    <input type="text" placeholder="Type a command" aria-label="Command">
                    <button aria-label="Show history"><svg class="up" viewBox="0 0 9 5"><path d="M0 5H9L4 0Z" fill="#4a4b4f"/></svg></button>
                </div>
            </div>
        </div>
    </main>
</div>
</body>
</html>
```
FILE: styles.css
```css
* {
    margin: 0;
    padding: 0;
    box-sizing: border-box;
}

body {
    background: #000;
    font-family: 'Open Sans', sans-serif;
    font-size: 14px;
    line-height: 20px;
    color: #f0f0f0;
    overflow: hidden;
}

button {
    display: flex;
    align-items: center;
    background: none;
    border: none;
    color: inherit;
    font: inherit;
    cursor: pointer;
}

a {
    color: inherit;
    text-decoration: none;
}

input,
select {
    border: none;
    outline: none;
    font: inherit;
}

svg {
    display: block;
    width: 20px;
    height: 20px;
    flex: none;
}

.app {
    display: flex;
    flex-direction: column;
    height: 100vh;
    margin-left: 2px;
    border: 1px solid #0696d7;
    border-bottom-color: #3b4453;
    background: #222933;
}

.caret {
    flex: none;
    width: 0;
    height: 0;
    border: 3px solid transparent;
    border-top: 4px solid #d9d9d9;
    border-bottom: none;
}

.caret.dim {
    border-top-color: #85888d;
}

.caret.large {
    border-width: 5px 5px 0;
}

/* Title bar */
.titlebar {
    display: flex;
    justify-content: space-between;
    align-items: center;
    height: 38px;
    padding: 0 9px 4px 3px;
    flex: none;
}

.quick-access {
    display: flex;
    align-items: center;
    gap: 10px;
}

.logo {
    align-items: flex-start;
    color: #fff;
    font-weight: bold;
}

.logo-fold {
    width: 5px;
    height: 23px;
}

.logo-a {
    width: 20px;
    height: 20px;
    background: #e51050;
}

.logo-arc {
    width: 26px;
    height: 16px;
    margin-top: 2px;
    background: #7d0a2c;
    font-size: 10px;
    line-height: 16px;
}

.bar-divider {
    width: 1px;
    height: 28px;
    background: #4a5260;
}

.customize svg {
    width: 10px;
    height: 9px;
}

.share {
    display: flex;
    align-items: center;
    gap: 6px;
    color: #88c7f9;
}

.title {
    display: flex;
    gap: 18px;
}

.infocenter {
    display: flex;
    align-items: center;
    gap: 10px;
}

.infocenter .bar-divider {
    margin: 0 2px;
}

.expand svg {
    width: 5px;
    height: 10px;
}

.search-box {
    display: flex;
    align-items: center;
    gap: 5px;
}

.search {
    width: 223px;
    height: 26px;
    padding: 0 3px;
    background: #474f61;
    color: #f0f0f0;
    font-size: 13px;
    font-style: italic;
}

.search::placeholder {
    color: #b4b8c0;
    opacity: 1;
}

.user {
    gap: 7px;
    margin-right: 6px;
}

.with-caret {
    gap: 8px;
}

.help-mark {
    width: 20px;
    height: 20px;
    border-radius: 50%;
    background: #d9d9d9;
    color: #444;
    font-weight: bold;
    text-align: center;
}

.window-buttons {
    display: flex;
    gap: 14px;
    margin-left: 80px;
    padding-bottom: 2px;
}

.window-buttons svg {
    width: 16px;
    height: 14px;
}

/* Ribbon tabs */
.ribbon-tabs {
    display: flex;
    gap: 1px;
    height: 25px;
    margin-left: 7px;
    flex: none;
}

.ribbon-tabs a {
    padding: 3px 12px 0;
    color: #b0b3b8;
}

.ribbon-tabs a.active {
    background: #3b4453;
    color: #f5f5f5;
}

.minimize-ribbon {
    gap: 6px;
    margin-left: 28px;
    padding-top: 2px;
}

.minimize-ribbon svg {
    width: 19px;
    height: 9px;
}

/* Ribbon */
.ribbon {
    display: flex;
    height: 124px;
    margin: 0 4px;
    background: #3b4453;
    flex: none;
}

.panel {
    display: flex;
    flex-direction: column;
    flex: none;
    border-right: 1px solid #222933;
}

.panel-body {
    display: flex;
    height: 98px;
    padding-top: 4px;
}

.panel h2 {
    display: flex;
    justify-content: center;
    align-items: center;
    gap: 8px;
    padding-top: 5px;
    font-size: 14px;
    font-weight: normal;
}

.big {
    position: relative;
    flex-direction: column;
    flex: none;
    padding-top: 3px;
    text-align: center;
}

.big svg {
    width: 40px;
    height: 40px;
    margin-bottom: 6px;
}

.big .caret {
    margin-top: 3px;
}

.big .caret.side {
    position: absolute;
    right: 4px;
    top: 65px;
}

.tool {
    height: 31px;
    font-size: 15px;
    white-space: nowrap;
}

.tool svg {
    margin-right: 6px;
}

.tool .caret {
    margin-left: 11px;
}

.icon-grid {
    display: grid;
    grid-template-rows: repeat(3, 31px);
    align-content: start;
}

.icon-grid svg,
.icon-row svg,
.layer-icons svg {
    margin-right: 0;
}

.icon-grid .caret,
.icon-row .caret {
    margin-left: 10px;
}

.panel-build {
    width: 514px;
}

.panel-build .big {
    width: 71px;
    border-right: 1px solid #222933;
}

.build-tools {
    display: grid;
    grid-template-rows: repeat(3, 31px);
    grid-auto-flow: column;
    grid-template-columns: 108px 118px auto;
    padding-left: 13px;
}

.build-tools .wide {
    font-size: 14px;
}

.build-tools .wide svg {
    margin-right: 8px;
}

.panel-draw {
    width: 156px;
}

.panel-draw .big {
    width: 58px;
}

.panel-draw .icon-grid {
    grid-template-columns: 50px 40px;
    padding-left: 3px;
}

.panel-modify {
    width: 216px;
}

.panel-modify .big {
    width: 78px;
}

.icon-rows {
    padding-left: 3px;
}

.icon-row {
    display: flex;
}

.icon-row .tool {
    margin-right: 10px;
}

.icon-row .tool .caret {
    margin-right: -1px;
}

.panel-view {
    width: 51px;
}

.panel-view .icon-grid {
    padding-left: 6px;
}

.panel-layers {
    width: 266px;
}

.layer-controls {
    width: 250px;
    margin-left: 2px;
}

.layer-icons {
    display: flex;
    gap: 13px;
    height: 31px;
    padding-left: 4px;
}

.combo {
    position: relative;
    display: flex;
    align-items: center;
    height: 28px;
    margin: 3px 0;
    border: 1px solid #2a313c;
    background: #4d596b;
}

.combo select {
    flex: 1;
    height: 26px;
    padding-left: 2px;
    appearance: none;
    background: none;
    color: #f5f5f5;
}

.combo .caret {
    position: absolute;
    right: 4px;
    pointer-events: none;
}

.layer-combo {
    gap: 5px;
    padding-left: 3px;
}

.swatch {
    width: 18px;
    height: 18px;
    background: #fff;
}

.panel-annotation {
    width: 184px;
}

.panel-annotation .big {
    width: 90px;
}

.panel-annotation .icon-grid {
    grid-template-columns: 47px 40px;
    padding-left: 3px;
}

.panel-utilities {
    width: 121px;
}

.panel-utilities .big {
    width: 88px;
}

.panel-utilities .icon-grid {
    padding-left: 3px;
}

.panel-section {
    width: 223px;
}

.panel-section .big {
    width: 60px;
}

.section-tools {
    padding-left: 3px;
}

.panel-details {
    border-right: none;
}

.panel-details .big {
    width: 96px;
}

/* Drawing tabs */
.doc-tabs {
    display: flex;
    align-items: center;
    height: 33px;
    padding: 3px 0 0 19px;
    flex: none;
}

.doc-tabs > a {
    margin-left: 14px;
}

.slash {
    width: 1px;
    height: 20px;
    background: #566070;
    transform: skewX(-24deg);
}

.doc-active {
    display: flex;
    align-items: center;
    gap: 10px;
    height: 30px;
    margin-left: 9px;
    padding: 0 14px 0 21px;
    background: #3b4453;
    clip-path: polygon(12px 0, 100% 0, calc(100% - 12px) 100%, 0 100%);
    font-weight: bold;
}

.doc-active svg {
    width: 12px;
    height: 12px;
}

.new-tab {
    margin: 0 16px 0 11px;
}

.new-tab svg {
    width: 16px;
    height: 16px;
}

/* Viewport */
.viewport {
    position: relative;
    flex: 1;
    margin-left: 3px;
    border-top: 5px solid #3b4453;
    background: #212830;
    overflow: hidden;
}

.view-label {
    display: flex;
    gap: 2px;
    padding: 5px 4px;
}

.view-buttons {
    position: absolute;
    top: 10px;
    right: 14px;
    display: flex;
    gap: 11px;
}

.view-buttons svg {
    width: 14px;
    height: 14px;
}

.crosshair {
    position: absolute;
    left: 618px;
    top: 0;
    width: 100px;
    height: 70px;
}

.solid {
    position: absolute;
    left: 654px;
    top: 121px;
    width: 555px;
    height: 577px;
}

.viewcube {
    position: absolute;
    top: 78px;
    right: 17px;
    width: 150px;
}

.viewcube > svg {
    width: 150px;
    height: 110px;
}

.wcs {
    gap: 8px;
    height: 21px;
    margin: 19px 0 0 49px;
    padding: 0 4px;
    border-radius: 5px;
    background: #9a9ba6;
    color: #5d5e68;
    font-family: 'Liberation Sans', sans-serif;
    font-size: 13px;
}

.wcs svg {
    width: 10px;
    height: 6px;
}

.ucs {
    position: absolute;
    left: 0;
    bottom: 30px;
    width: 100px;
    height: 100px;
}

/* Command line */
.command-window {
    position: absolute;
    right: 51px;
    bottom: 82px;
    display: flex;
    width: 604px;
    border-radius: 3px;
    background: #2a303d;
    font-family: 'Liberation Mono', monospace;
    font-size: 15px;
}

.command-grip {
    display: flex;
    flex-direction: column;
    align-items: flex-start;
    width: 31px;
    padding: 6px 0 0 5px;
}

.grip {
    height: 7px;
    margin-bottom: 6px;
}

.command-grip button {
    margin-bottom: 13px;
}

.command-grip button svg {
    width: 16px;
    height: 16px;
}

.command-grip button .wrench {
    width: 20px;
    height: 20px;
}

.command-main {
    flex: 1;
    padding: 1px 0;
}

.command-log {
    padding: 10px 3px 0;
    background: #969798;
    color: #0c0c0c;
    line-height: 19px;
}

.command-input {
    display: flex;
    align-items: center;
    height: 25px;
    margin-top: 1px;
    padding: 0 5px 0 4px;
    background: #bdbec0;
}

.command-input input {
    flex: 1;
    padding-left: 9px;
    background: none;
    color: #222;
    font-style: italic;
}

.command-input input::placeholder {
    color: #5d5e61;
    opacity: 1;
}

.command-input button svg {
    width: 32px;
    height: 16px;
}

.command-input button .up {
    width: 9px;
    height: 5px;
}
```
